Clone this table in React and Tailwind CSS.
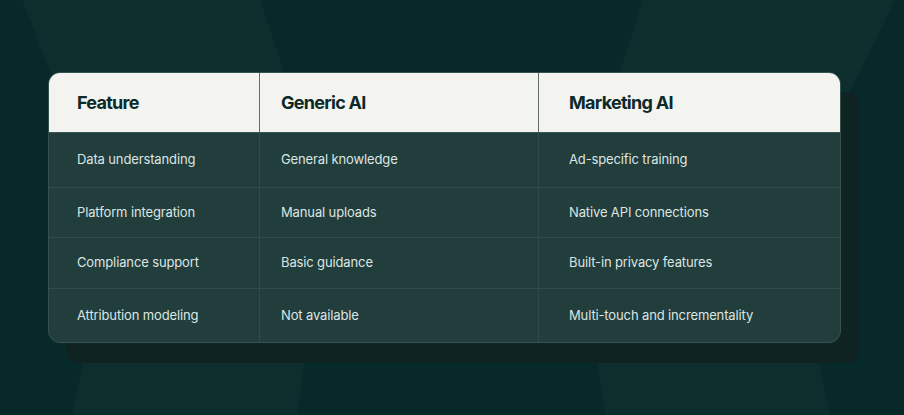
const rows = [
  { h: 'h-[54px]', cells: ['Data understanding', 'General knowledge', 'Ad-specific training'] },
  { h: 'h-[50px]', cells: ['Platform integration', 'Manual uploads', 'Native API connections'] },
  { h: 'h-[51px]', cells: ['Compliance support', 'Basic guidance', 'Built-in privacy features'] },
  { h: 'h-[54px]', cells: ['Attribution modeling', 'Not available', 'Multi-touch and incrementality'] },
]

const pads = ['pl-[28px]', 'pl-[21px]', 'pl-[30px]']

function Backdrop() {
  return (
    <svg className="absolute inset-0" width="904" height="415" viewBox="0 0 904 415">
      <polygon points="22,0 260,0 292,96 60,96" fill="#0e2d2d" />
      <polygon points="643,0 895,0 848,96 612,96" fill="#0e2d2d" />
      <polygon points="88,340 308,340 297,415 72,415" fill="#0e2d2d" />
      <polygon points="594,340 814,340 830,415 605,415" fill="#0e2d2d" />
    </svg>
  )
}

export default function App() {
  return (
    <div className="relative w-[904px] h-[415px] overflow-hidden bg-[#08292a] font-['Inter',sans-serif]">
      <Backdrop />
      <div className="relative pt-[72px] pl-[48px]">
        <div className="w-[793px] rounded-[12px] overflow-hidden border border-[#34524f] bg-[#213d3c] shadow-[18px_20px_0_0_#0f2322]">
          <div className="grid grid-cols-[210px_279px_302px] h-[60px] bg-[#f3f4ef] border-b border-[#3a5856]">
            {['Feature', 'Generic AI', 'Marketing AI'].map((t, i) => (
              <div
                key={t}
                className={`flex items-center ${pads[i]} ${i > 0 ? 'border-l border-[#5f706d]' : ''} text-[18px] font-bold tracking-[-0.04em] text-[#0c2a2a]`}
              >
                {t}
              </div>
            ))}
          </div>
          {rows.map((r, ri) => (
            <div
              key={ri}
              className={`grid grid-cols-[210px_279px_302px] ${r.h} ${ri > 0 ? 'border-t border-[#2f4c4a]' : ''}`}
            >
              {r.cells.map((c, i) => (
                <div
                  key={c}
                  className={`flex items-center ${pads[i]} ${i > 0 ? 'border-l border-[#2f4c4a]' : ''} text-[13px] tracking-[-0.01em] text-[#dde5e2]`}
                >
                  {c}
                </div>
              ))}
            </div>
          ))}
        </div>
      </div>
    </div>
  )
}
